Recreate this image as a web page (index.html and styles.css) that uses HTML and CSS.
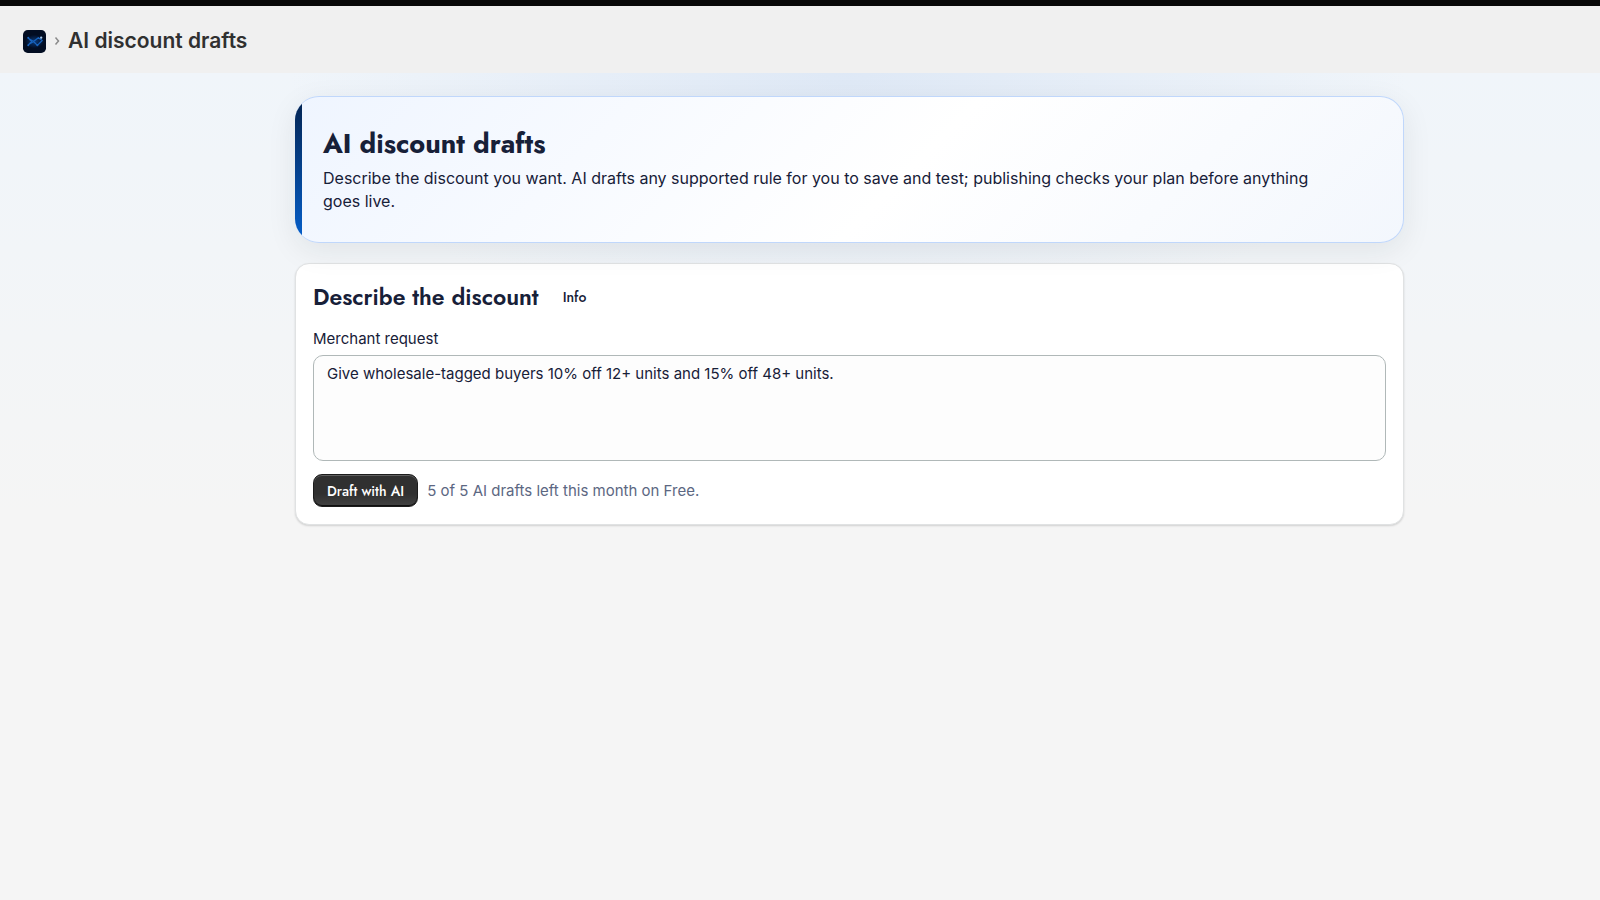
FILE: index.html
```html
<!DOCTYPE html>
<html lang="en">
<head>
  <meta charset="UTF-8">
  <meta name="viewport" content="width=device-width, initial-scale=1.0">
  <title>AI discount drafts</title>
  <link rel="stylesheet" href="styles.css">
</head>
<body>
  <header class="topbar">
    <a class="app-icon" href="#" aria-label="App home">
      <svg viewBox="0 0 24 24" width="23" height="23" aria-hidden="true">
        <defs>
          <radialGradient id="glow">
            <stop offset="0" stop-color="#0a3a7c"/>
            <stop offset="1" stop-color="#020d22"/>
          </radialGradient>
        </defs>
        <rect width="24" height="24" rx="5" fill="#020d22"/>
        <ellipse cx="12" cy="12" rx="10" ry="7" fill="url(#glow)"/>
        <path d="M5 8l4 4-4 4M6 9l5 3 4 4 5-5-4-3-5 4-5 3" fill="none" stroke="#1763bd" stroke-width="1.3" stroke-linejoin="round"/>
        <circle cx="5.500" cy="8" r="1" fill="#1763bd"/>
        <circle cx="5.500" cy="16" r="1" fill="#1763bd"/>
        <circle cx="15" cy="16" r="1" fill="#1763bd"/>
        <circle cx="19" cy="8" r="1.200" fill="#a9cdf2"/>
      </svg>
    </a>
    <svg class="chevron" viewBox="0 0 6 10" width="6" height="10" aria-hidden="true">
      <path d="M1.500 1.500L4.500 5L1.500 8.500" fill="none" stroke="#8a8a8a" stroke-width="1.500"/>
    </svg>
    <span class="topbar-title">AI discount drafts</span>
  </header>

  <main class="page">
    <div class="content">
      <section class="hero">
        <h1>AI discount drafts</h1>
        <p>Describe the discount you want. AI drafts any supported rule for you to save and test; publishing checks your plan before anything goes live.</p>
      </section>

      <section class="card">
        <div class="card-header">
          <h2>Describe the discount</h2>
          <button type="button" class="info-button">Info</button>
        </div>
        <form class="draft-form">
          <label for="request">Merchant request</label>
          <textarea id="request" rows="4">Give wholesale-tagged buyers 10% off 12+ units and 15% off 48+ units.</textarea>
          <div class="actions">
            <button type="button" class="primary-button">Draft with AI</button>
            <span class="quota">5 of 5 AI drafts left this month on Free.</span>
          </div>
        </form>
      </section>
    </div>
  </main>
</body>
</html>
```
FILE: styles.css
```css
* {
  box-sizing: border-box;
}
body {
  margin: 0;
  min-height: 100vh;
  display: flex;
  flex-direction: column;
  font-family: Inter, "Liberation Sans", sans-serif;
  font-size: 15px;
  line-height: 20px;
  color: #172038;
  background: #f5f5f5;
}
h1,
h2,
button {
  font-family: Jost, Lato, sans-serif;
}
h1,
h2,
p {
  margin: 0;
}

/* Top bar */
.topbar {
  display: flex;
  align-items: center;
  gap: 8px;
  padding: 21px 23px 18px;
  border-top: 6px solid #080808;
  background: #f0f0f0;
}
.app-icon {
  display: flex;
}
.topbar-title {
  font-size: 21px;
  line-height: 28px;
  font-weight: 600;
  color: #303030;
}

/* Page */
.page {
  flex: 1;
  padding: 23px 0 24px 99px;
  background:
    radial-gradient(560px 260px at 53% 0, rgba(196, 214, 240, 0.4), rgba(196, 214, 240, 0)),
    linear-gradient(#f0f5fa, #f5f5f5 440px);
}
.content {
  max-width: 1109px;
  margin: 0 auto;
  display: flex;
  flex-direction: column;
  gap: 20px;
}
.hero {
  position: relative;
  overflow: hidden;
  padding: 31px 28px 29px;
  border: 1px solid #c0d7fb;
  border-left: 0;
  border-radius: 24px;
  background: linear-gradient(135deg, #eff5ff 0%, #ffffff 55%, #f3f7fd 100%);
  box-shadow: 0 8px 30px rgba(20, 35, 40, 0.08);
}
.hero::before {
  content: "";
  position: absolute;
  inset: 0 auto 0 0;
  width: 7px;
  background: linear-gradient(#04234f, #0560cc);
}
.hero h1 {
  font-size: 27px;
  line-height: 32px;
  margin-bottom: 7px;
}
.hero p {
  max-width: 1020px;
  font-size: 16px;
  line-height: 23px;
}

/* Card */
.card {
  padding: 17px;
  border: 1px solid #e0e2e3;
  border-radius: 14px;
  background: #fff;
  box-shadow: 0 1px 2px rgba(0, 0, 0, 0.15);
}
.card-header {
  display: flex;
  align-items: center;
  gap: 12px;
  margin-bottom: 16px;
}
.card-header h2 {
  font-size: 23px;
  line-height: 32px;
  font-weight: 600;
}
.info-button {
  padding: 4px 12px;
  border: 0;
  border-radius: 8px;
  background: none;
  color: inherit;
  font-size: 14px;
  line-height: 20px;
  font-weight: 500;
  cursor: pointer;
}
.draft-form label {
  display: block;
  margin-bottom: 6px;
}
.draft-form textarea {
  display: block;
  width: 100%;
  height: 106px;
  padding: 8px 13px;
  border: 1px solid #b0b8b8;
  border-radius: 10px;
  background: #fdfdfd;
  color: inherit;
  font: inherit;
  resize: none;
}
.actions {
  display: flex;
  align-items: center;
  gap: 9px;
  margin-top: 13px;
}
.primary-button {
  height: 33px;
  padding: 0 13px;
  border: 1px solid #1c1c1c;
  border-radius: 9px;
  background: linear-gradient(#303030 60%, #424242);
  box-shadow: inset 0 1px 0 #606060, inset 0 -1px 0 #101010;
  color: #fff;
  font-size: 14px;
  font-weight: 500;
  cursor: pointer;
}
.quota {
  color: #5c6782;
}
```
